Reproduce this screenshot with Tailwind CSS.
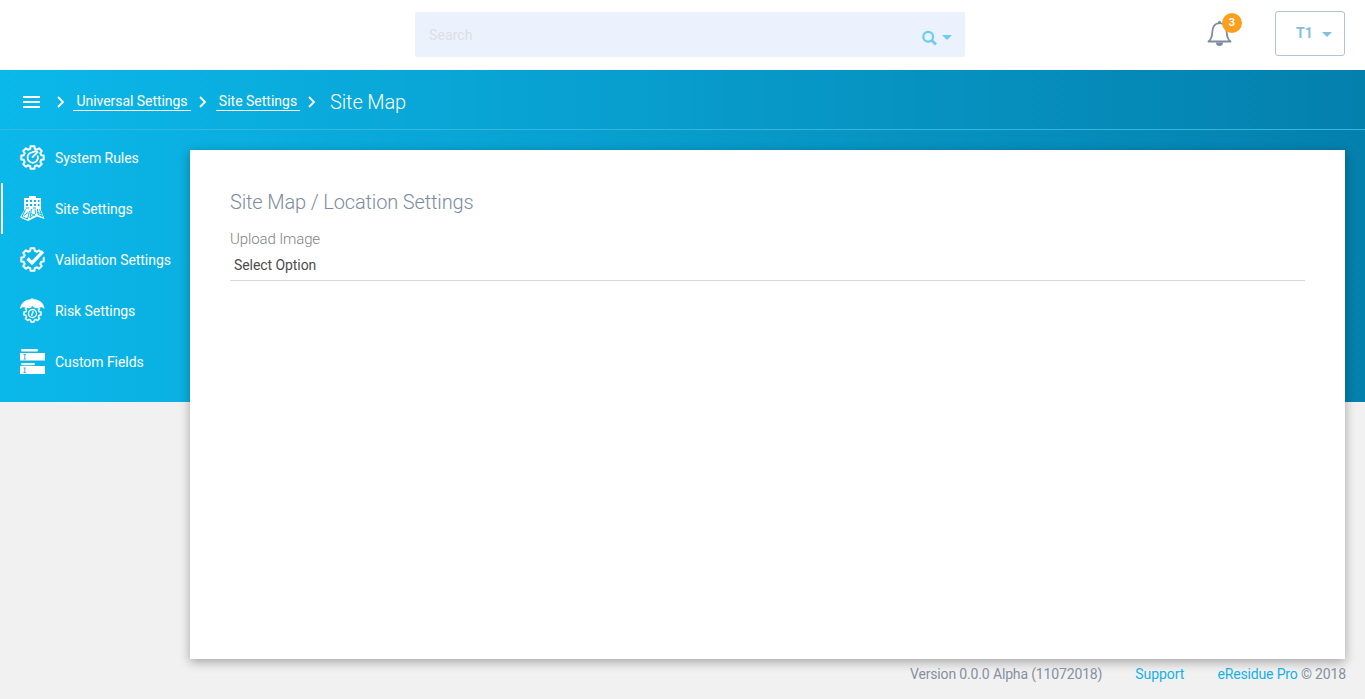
<!DOCTYPE html>
<html lang="en">
<head>
<meta charset="utf-8">
<title>Site Map</title>
<script src="https://cdn.jsdelivr.net/npm/@tailwindcss/browser@4"></script>
</head>
<body class="h-[699px] overflow-hidden bg-[#f1f1f1] font-['Roboto',sans-serif] text-sm">
<svg class="hidden">
  <symbol id="gear" viewBox="-12.5 -12.5 25 25"><path fill="none" stroke="currentColor" stroke-width="2" stroke-linejoin="round" d="M11.2-2 11.2 2 8.7 2.3 7.8 4.5 9.3 6.5 6.5 9.3 4.5 7.8 2.3 8.7 2 11.2-2 11.2-2.3 8.7-4.5 7.8-6.5 9.3-9.3 6.5-7.8 4.5-8.7 2.3-11.2 2-11.2-2-8.7-2.3-7.8-4.5-9.3-6.5-6.5-9.3-4.5-7.8-2.3-8.7-2-11.2 2-11.2 2.3-8.7 4.5-7.8 6.5-9.3 9.3-6.5 7.8-4.5 8.7-2.3z"/></symbol>
</svg>
<header class="flex h-[70px] bg-white pl-[415px] pr-5">
  <div class="mt-3 flex h-[45px] w-[550px] items-center rounded-xs bg-[#ebf2fd] pl-[14px] pr-[13px] text-[#dcdfe4]">
    <span class="flex-1 tracking-[0.1px]">Search</span>
    <svg class="mt-[6px] h-4 w-[15px] text-[#68cdee]" viewBox="0 0 15 16" fill="none" stroke="currentColor" stroke-width="2.2"><circle cx="6.2" cy="6.7" r="4.900"/><path d="M9.8 10.5 14 14.5" stroke-width="2.800"/></svg>
    <svg class="ml-[5px] mt-[5px] h-[5px] w-[10px] fill-[#68cdee]" viewBox="0 0 10 5"><path d="M0 0h10L5 5z"/></svg>
  </div>
  <div class="relative ml-[242px] mt-5 h-[27px] w-[25px]">
    <svg class="h-[27px] w-[25px] text-[#7c8b9f]" viewBox="0 0 25 27" fill="none" stroke="currentColor" stroke-width="1.8"><path d="M1.5 21.5C4 19.5 5 17.5 5.2 13 5.4 6.500 7.500 3.200 12.500 3.200S19.600 6.500 19.800 13C20 17.500 21 19.500 23.500 21.500z" stroke-linejoin="round"/><path d="M9 22.500a3.500 3.500 0 0 0 7 0z" fill="currentColor" stroke="none"/><circle cx="12.500" cy="2.300" r="1.500" fill="currentColor" stroke="none"/></svg>
    <span class="absolute -top-[7px] left-[15px] flex size-5 items-center justify-center rounded-full bg-[#fc9f1c] text-[11px] font-bold text-white">3</span>
  </div>
  <div class="ml-auto mt-[11px] flex h-[45px] w-[70px] items-center rounded-[3px] border border-[#b3c3d1] pb-px pl-[20px] text-[#84bfdc]">
    <span class="font-bold">T1</span>
    <svg class="ml-[9px] mt-[3px] h-[5px] w-[10px] fill-[#84bfdc]" viewBox="0 0 10 5"><path d="M0 0h10L5 5z"/></svg>
  </div>
</header>
<div class="h-[629px] bg-[linear-gradient(90deg,#0bb8ea,#0480ad)] bg-[length:100%_332px] bg-no-repeat">
  <nav class="flex h-[60px] items-center border-b border-[#35b6de] pb-[3px] pl-[23px] text-white">
    <svg class="mt-[7px] h-3 w-[17px] fill-white" viewBox="0 0 17 12"><path d="M0 0h17v2H0zM0 5h17v2H0zM0 10h17v2H0z"/></svg>
    <svg class="ml-[17px] mt-[8px] h-3 w-2" viewBox="0 0 8 12" fill="none" stroke="white" stroke-width="1.8"><path d="m1 1 5 5-5 5"/></svg>
    <a class="ml-[8px] mt-[6px] h-[19px] w-[118px] border-b border-white text-center leading-[19px] tracking-[-0.05px]">Universal Settings</a>
    <svg class="ml-[8px] mt-[8px] h-3 w-2" viewBox="0 0 8 12" fill="none" stroke="white" stroke-width="1.8"><path d="m1 1 5 5-5 5"/></svg>
    <a class="ml-[9px] mt-[6px] h-[19px] w-[84px] border-b border-white text-center leading-[19px]">Site Settings</a>
    <svg class="ml-[8px] mt-[8px] h-3 w-2" viewBox="0 0 8 12" fill="none" stroke="white" stroke-width="1.8"><path d="m1 1 5 5-5 5"/></svg>
    <h1 class="ml-[14px] mt-[8px] text-xl leading-6 font-light tracking-[-0.13px]">Site Map</h1>
  </nav>
  <div class="flex">
    <aside class="w-[190px] pt-[2px] tracking-[-0.05px] text-white">
      <a class="flex h-[51px] items-center gap-[10px] pl-5">
        <svg class="size-[25px]" viewBox="0 0 25 25" fill="none" stroke="currentColor"><use href="#gear" width="25" height="25"/><path d="M17.500 10.500A5.200 5.200 0 1 1 12 7.400L16.500 5.800M12 12.700 18.200 6.500" stroke-width="1.800"/></svg>
        <span>System Rules</span>
      </a>
      <a class="-mr-px ml-px flex h-[51px] items-center gap-[10px] border-l-2 border-white pl-[18px]">
        <svg class="-ml-px size-[25px]" viewBox="0 0 25 25" fill="none" stroke="currentColor"><path fill="currentColor" stroke="none" fill-rule="evenodd" d="M4 2h5V0h7v2h5v12l3.500 9-7.500-2.500L8 25 0 21.500l4-7zM6 4v2h2V4zm4 0v2h2V4zm4 0v2h2V4zm4 0v2h1.500V4zM6 8v2h2V8zm4 0v2h2V8zm4 0v2h2V8zm4 0v2h1.500V8z"/><g stroke="#0ab5e7" stroke-width="1"><path d="m5.500 13.500-3.500 7 5.500 2.500 2-8M11.500 13l-1.500 9 5.500-4.500-.5-4M17.500 13l.5 5.500 4.500 2-3-7"/><path d="m4 19.500 4-3M11 17.500l4 2M17 16.500l4 1M6 12h3M13 12h3"/></g></svg>
        <span>Site Settings</span>
      </a>
      <a class="flex h-[51px] items-center gap-[10px] pl-5">
        <svg class="size-[25px]" viewBox="0 0 25 25" fill="none"><use href="#gear" width="25" height="25"/><path d="M16 15 24.500 5" stroke="#0ab6e8" stroke-width="5"/><path d="m7.500 11.500 4.500 4.500L23 4.500" stroke="currentColor" stroke-width="3.300"/></svg>
        <span>Validation Settings</span>
      </a>
      <a class="flex h-[51px] items-center gap-[10px] pl-5">
        <svg class="size-[25px]" viewBox="0 0 25 25" fill="none" stroke="currentColor"><use href="#gear" x="3" y="6" width="19" height="19"/><path fill="currentColor" stroke="none" d="M0 11C.5 5 5 1.500 11 1.200V.4h2.500v.8C20 1.500 24 5 24.500 11 22 8.800 20 9 18 10.500 14.500 7.500 10 7.500 6.500 10.500 4.500 9 2.500 8.800 0 11z"/><circle cx="12.500" cy="15.500" r="4" stroke-width="1.300"/><path d="M11.600 17.800 13.200 13.200" stroke-width="1.500"/></svg>
        <span>Risk Settings</span>
      </a>
      <a class="flex h-[51px] items-center gap-[10px] pl-5">
        <svg class="size-[25px]" viewBox="0 0 25 25" fill="currentColor"><rect x="1" width="17" height="2.500" rx="1.200"/><path d="M0 4h25v7.500H0z"/><rect x="1" y="14" width="14" height="2.200" rx="1.100"/><path d="M0 17h25v8H0z"/><path d="M3.500 5.500h2.500M4.750 5.500v4.500M3.500 10h2.500M3.500 19h2.500M4.750 19v4.500M3.500 23.500h2.500" stroke="#45a9dc" stroke-width=".9"/></svg>
        <span>Custom Fields</span>
      </a>
    </aside>
    <main class="mt-5 h-[509px] w-[1155px] bg-white px-10 pt-[38px] shadow-[0_3px_10px_rgba(0,0,0,0.32)]">
      <h2 class="text-xl leading-7 font-light tracking-[-0.14px] text-[#7c8b9f]">Site Map / Location Settings</h2>
      <p class="mt-[13px] text-[15px] leading-5 font-light tracking-[-0.12px] text-[#7f7f84]">Upload Image</p>
      <div class="mt-[6px] h-[26px] border-b border-[#d6d8dc] pl-1 leading-5 tracking-[-0.07px] text-[#4c4c4c]">Select Option</div>
    </main>
  </div>
  <footer class="flex justify-end pr-[19px] pt-[5px] leading-5 tracking-[-0.15px] text-[#84909f]">
    <span>Version 0.0.0 Alpha (11072018)</span>
    <a class="ml-[33px] tracking-[-0.05px] text-[#14b1e7]">Support</a>
    <span class="ml-[33px]"><a class="text-[#14b1e7]">eResidue Pro</a> © 2018</span>
  </footer>
</div>
</body>
</html>
